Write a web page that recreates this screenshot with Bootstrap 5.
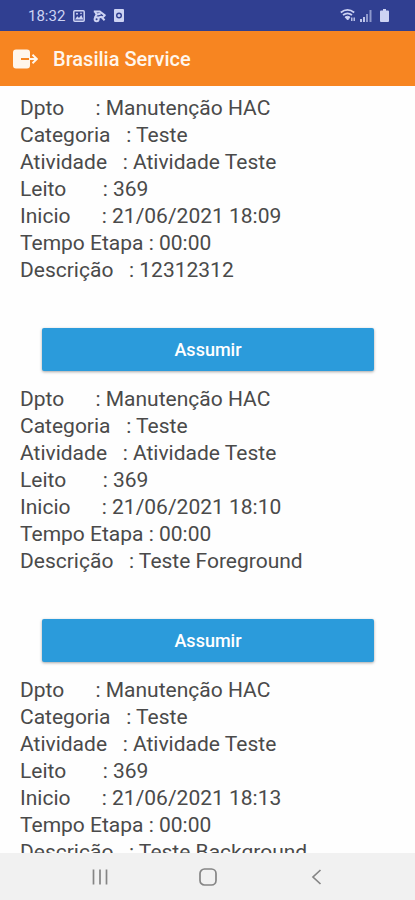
<!DOCTYPE html>
<html lang="pt-BR">
<head>
<meta charset="utf-8">
<meta name="viewport" content="width=device-width, initial-scale=1">
<title>Brasilia Service</title>
<link href="https://cdn.jsdelivr.net/npm/bootstrap@5.3.0/dist/css/bootstrap.min.css" rel="stylesheet">
<style>
  body { font-family: Roboto, "Noto Sans", sans-serif; background: #fefefe; }
  .status-strip { background: #303f91; color: #cdd3f3; height: 31px; padding: 0 26px 0 28px; font-size: 15px; line-height: 20px; }
  .app-header { background: #f78521; height: 55px; padding: 0 12px; }
  .app-title { color: #fff6ec; font-size: 20px; line-height: 24px; font-weight: 500; padding-left: 15px; }
  .logout-btn { width: 26px; height: 24px; }
  .task-list { min-height: 0; padding-top: 9px; }
  .task { padding: 0 20px 15px; }
  .task-line { white-space: pre; font-size: 21px; line-height: 27px; color: #4a4a4a; }
  .btn-assume { --bs-btn-bg: #2b9bdb; --bs-btn-color: #fff; --bs-btn-hover-bg: #2489c4; --bs-btn-hover-color: #fff; --bs-btn-active-bg: #1f7bb1; --bs-btn-active-color: #fff;
    height: 43px; font-size: 18px; line-height: 24px; font-weight: 500; border: 0; border-radius: 2px; box-shadow: 0 1px 3px rgba(0, 0, 0, .35); }
  .btn-wrap { padding: 44px 21px 0 22px; }
  .nav-keys { background: #f1f1f1; height: 47px; padding: 0 46px; }
  .nav-keys .btn { border: 0; }
</style>
<script defer src="https://cdn.jsdelivr.net/npm/bootstrap@5.3.0/dist/js/bootstrap.bundle.min.js"></script>
</head>
<body class="vh-100 d-flex flex-column overflow-hidden">
  <div class="status-strip d-flex align-items-center justify-content-between flex-shrink-0">
    <div class="d-flex align-items-center">
      <span class="me-2">18:32</span>
      <svg class="me-2" width="12" height="12" viewBox="0 0 12 12" aria-hidden="true">
        <rect x=".8" y=".8" width="10.4" height="10.4" rx="1" fill="none" stroke="currentColor" stroke-width="1.5"/>
        <path d="M2 9.5 4.3 6.3 6 8 8.3 5 10.3 9.5z" fill="currentColor"/><circle cx="4" cy="3.8" r="1" fill="currentColor"/><circle cx="8" cy="3.4" r=".8" fill="currentColor"/>
      </svg>
      <svg class="me-2" width="13" height="14" viewBox="0 0 13 14" fill="none" stroke="currentColor" stroke-width="2" stroke-linejoin="round" aria-hidden="true">
        <path d="M.8 2.400H6.500L11.800 6.200 9.400 8.600M2 2.600 3.600 5.600 7.600 4.800M3.600 5.600 2 8.500"/><circle cx="3.600" cy="10.200" r="2"/><path d="M5.400 8.800 8.200 7.800 11.600 11.200"/>
      </svg>
      <svg width="10" height="13" viewBox="0 0 10 13" aria-hidden="true">
        <rect width="10" height="13" rx="1" fill="currentColor"/><circle cx="5" cy="6.500" r="2.300" fill="none" stroke="#303f91" stroke-width="1.400"/>
      </svg>
    </div>
    <div class="d-flex align-items-center">
      <svg class="me-1" width="16" height="13" viewBox="0 0 16 13" fill="none" stroke="currentColor" aria-hidden="true">
        <path d="M.8 3.5Q7.5-1.6 14.2 3.5" stroke-width="1.8"/><path d="M3 6Q7.5 2.6 12 6" stroke-width="1.7"/><path d="M5 8.1Q7.5 6.4 10 8.1L7.7 11z" fill="currentColor" stroke-width="1"/>
        <path d="M11.800 8.500v3.500M14.200 8.500v3.500" stroke-width="1.300"/>
      </svg>
      <svg class="me-2" width="12" height="13" viewBox="0 0 12 13" aria-hidden="true">
        <path d="M0 10h2v3H0zM3 8h2v5H3z" fill="currentColor" opacity=".9"/><path d="M6 5h2v8H6zM9.5 1h2v12h-2z" fill="currentColor" opacity=".6"/>
      </svg>
      <svg width="9" height="13" viewBox="0 0 9 13" aria-hidden="true"><path d="M3 0h3v1.5h2q1 0 1 1V12q0 1-1 1H1q-1 0-1-1V2.5q0-1 1-1h2z" fill="currentColor"/></svg>
    </div>
  </div>

  <header class="app-header navbar flex-nowrap justify-content-start flex-shrink-0">
    <button type="button" class="logout-btn btn border-0 p-0 d-flex align-items-center" aria-label="Sair">
      <svg width="26" height="22" viewBox="0 0 26 22" aria-hidden="true">
        <path d="M4 1.500h11q3 0 3 3V10H9v2h9v5.500q0 3-3 3H4q-3 0-3-3v-13q0-3 3-3z" fill="#fff6ec"/>
        <path d="M17 11h8M20.500 6.800 24.800 11l-4.300 4.200" fill="none" stroke="#fff6ec" stroke-width="1.900"/>
      </svg>
    </button>
    <h1 class="app-title mb-0">Brasilia Service</h1>
  </header>

  <main class="task-list flex-grow-1 overflow-hidden">
    <article class="task">
      <div class="task-line">Dpto      : Manutenção HAC</div>
      <div class="task-line">Categoria   : Teste</div>
      <div class="task-line">Atividade   : Atividade Teste</div>
      <div class="task-line">Leito       : 369</div>
      <div class="task-line">Inicio      : 21/06/2021 18:09</div>
      <div class="task-line">Tempo Etapa : 00:00</div>
      <div class="task-line">Descrição   : 12312312</div>
      <div class="btn-wrap"><button type="button" class="btn btn-assume w-100">Assumir</button></div>
    </article>
    <article class="task">
      <div class="task-line">Dpto      : Manutenção HAC</div>
      <div class="task-line">Categoria   : Teste</div>
      <div class="task-line">Atividade   : Atividade Teste</div>
      <div class="task-line">Leito       : 369</div>
      <div class="task-line">Inicio      : 21/06/2021 18:10</div>
      <div class="task-line">Tempo Etapa : 00:00</div>
      <div class="task-line">Descrição   : Teste Foreground</div>
      <div class="btn-wrap"><button type="button" class="btn btn-assume w-100">Assumir</button></div>
    </article>
    <article class="task">
      <div class="task-line">Dpto      : Manutenção HAC</div>
      <div class="task-line">Categoria   : Teste</div>
      <div class="task-line">Atividade   : Atividade Teste</div>
      <div class="task-line">Leito       : 369</div>
      <div class="task-line">Inicio      : 21/06/2021 18:13</div>
      <div class="task-line">Tempo Etapa : 00:00</div>
      <div class="task-line">Descrição   : Teste Background</div>
    </article>
  </main>

  <nav class="nav-keys d-flex align-items-center flex-shrink-0" aria-label="Sistema">
    <button type="button" class="btn p-0 flex-fill" aria-label="Recentes">
      <svg width="18" height="18" viewBox="0 0 18 18" stroke="#858585" stroke-width="1.700" aria-hidden="true"><path d="M2.500 1.500v15M9 1.500v15M15.500 1.500v15"/></svg>
    </button>
    <button type="button" class="btn p-0 flex-fill" aria-label="Início">
      <svg width="18" height="18" viewBox="0 0 18 18" fill="none" stroke="#858585" stroke-width="1.700" aria-hidden="true"><rect x="1" y="1" width="16" height="16" rx="4.500"/></svg>
    </button>
    <button type="button" class="btn p-0 flex-fill" aria-label="Voltar">
      <svg width="18" height="18" viewBox="0 0 18 18" fill="none" stroke="#858585" stroke-width="1.700" aria-hidden="true"><path d="M14.500 2 7 9l7.500 7"/></svg>
    </button>
  </nav>
</body>
</html>
